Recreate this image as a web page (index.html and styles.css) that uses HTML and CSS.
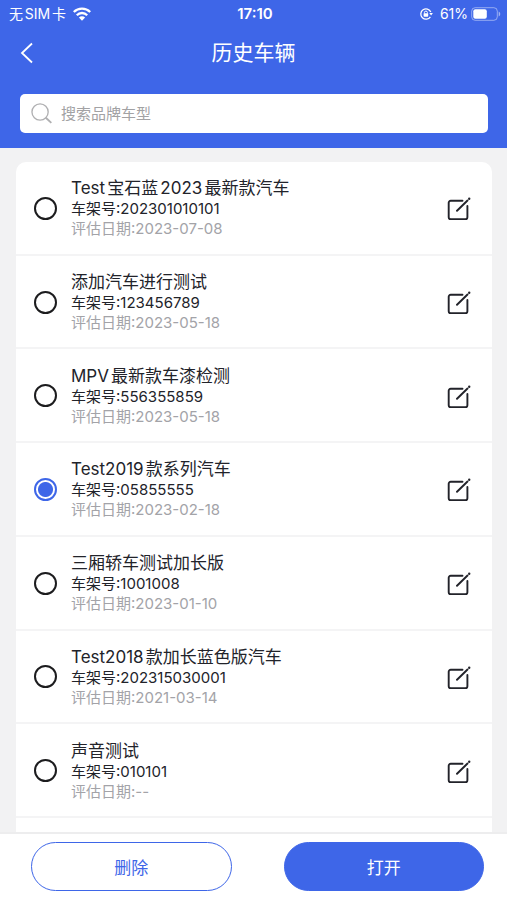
FILE: index.html
```html
<!DOCTYPE html>
<html lang="zh-CN">
<head>
<meta charset="utf-8">
<meta name="viewport" content="width=device-width, initial-scale=1">
<title>历史车辆</title>
<link rel="stylesheet" href="styles.css">
</head>
<body>
<svg class="sprite" aria-hidden="true">
  <symbol id="edit" viewBox="0 0 24 24">
    <path d="M15.500 4.800H3.700a2 2 0 0 0-2 2V21.300a2 2 0 0 0 2 2H18.400a2 2 0 0 0 2-2V10M10 14.800L20.500 4.500" fill="none" stroke="currentColor" stroke-width="1.900" stroke-linecap="round"/>
    <circle cx="22.200" cy="2.800" r="1.200" fill="currentColor"/>
  </symbol>
</svg>
<header class="header">
  <div class="status">
    <div class="status-side">
      <span>无SIM卡</span>
      <svg class="wifi" viewBox="0 0 18 14" aria-hidden="true">
        <g fill="none" stroke="#fff" stroke-width="2.300">
          <path d="M.8 5a11.600 11.600 0 0 1 16.400 0"/>
          <path d="M3.800 8.200a7.300 7.300 0 0 1 10.400 0"/>
        </g>
        <path d="M9 13.800L5.900 10.600a4.400 4.400 0 0 1 6.200 0z" fill="#fff"/>
      </svg>
    </div>
    <strong class="clock">17:10</strong>
    <div class="status-side status-end">
      <svg class="lock" viewBox="0 0 14 14" aria-hidden="true">
        <path d="M11.800 5A5.200 5.200 0 1 0 11.400 9.800" fill="none" stroke="#fff" stroke-width="1.300"/>
        <path d="M10.300 6h3.600l-1.800 2.500z" fill="#fff"/>
        <path d="M5.400 6.500V5.600a1.500 1.500 0 0 1 3 0v.9" fill="none" stroke="#fff"/>
        <rect x="4.600" y="6.200" width="4.600" height="3.500" rx=".6" fill="#fff"/>
      </svg>
      <span>61%</span>
      <svg class="battery" viewBox="0 0 30 14" aria-hidden="true">
        <rect x=".7" y=".7" width="25.600" height="12.600" rx="3.500" fill="none" stroke="#fff" stroke-opacity=".45"/>
        <rect x="2.300" y="2.300" width="13.500" height="9.400" rx="2" fill="#fff"/>
        <path d="M27.700 4.500v5q1.600-.8 1.600-2.500t-1.600-2.500z" fill="#fff" fill-opacity=".5"/>
      </svg>
    </div>
  </div>
  <div class="nav">
    <button class="back" type="button" aria-label="返回">
      <svg viewBox="0 0 14 22" aria-hidden="true"><path d="M12 1.500L2 11l10 9.500" fill="none" stroke="#fff" stroke-width="1.800"/></svg>
    </button>
    <h1>历史车辆</h1>
  </div>
  <label class="search">
    <svg viewBox="0 0 22 22" aria-hidden="true"><g fill="none" stroke="#b0b0b2" stroke-width="1.400"><circle cx="9.500" cy="9.500" r="8.500"/><path d="M15.500 15.500l5.800 5.300" stroke-width="2"/></g></svg>
    <input type="search" placeholder="搜索品牌车型" aria-label="搜索品牌车型">
  </label>
</header>
<main class="content">
  <ul class="list">
    <li class="row">
      <input type="radio" name="car" id="c1">
      <label for="c1"><span class="name">Test宝石蓝2023最新款汽车</span><span class="vin">车架号:202301010101</span><span class="date">评估日期:2023-07-08</span></label>
      <button class="edit" type="button" aria-label="编辑"><svg><use href="#edit"/></svg></button>
    </li>
    <li class="row">
      <input type="radio" name="car" id="c2">
      <label for="c2"><span class="name">添加汽车进行测试</span><span class="vin">车架号:123456789</span><span class="date">评估日期:2023-05-18</span></label>
      <button class="edit" type="button" aria-label="编辑"><svg><use href="#edit"/></svg></button>
    </li>
    <li class="row">
      <input type="radio" name="car" id="c3">
      <label for="c3"><span class="name">MPV最新款车漆检测</span><span class="vin">车架号:556355859</span><span class="date">评估日期:2023-05-18</span></label>
      <button class="edit" type="button" aria-label="编辑"><svg><use href="#edit"/></svg></button>
    </li>
    <li class="row">
      <input type="radio" name="car" id="c4" checked>
      <label for="c4"><span class="name">Test2019款系列汽车</span><span class="vin">车架号:05855555</span><span class="date">评估日期:2023-02-18</span></label>
      <button class="edit" type="button" aria-label="编辑"><svg><use href="#edit"/></svg></button>
    </li>
    <li class="row">
      <input type="radio" name="car" id="c5">
      <label for="c5"><span class="name">三厢轿车测试加长版</span><span class="vin">车架号:1001008</span><span class="date">评估日期:2023-01-10</span></label>
      <button class="edit" type="button" aria-label="编辑"><svg><use href="#edit"/></svg></button>
    </li>
    <li class="row">
      <input type="radio" name="car" id="c6">
      <label for="c6"><span class="name">Test2018款加长蓝色版汽车</span><span class="vin">车架号:202315030001</span><span class="date">评估日期:2021-03-14</span></label>
      <button class="edit" type="button" aria-label="编辑"><svg><use href="#edit"/></svg></button>
    </li>
    <li class="row">
      <input type="radio" name="car" id="c7">
      <label for="c7"><span class="name">声音测试</span><span class="vin">车架号:010101</span><span class="date">评估日期:--</span></label>
      <button class="edit" type="button" aria-label="编辑"><svg><use href="#edit"/></svg></button>
    </li>
  </ul>
</main>
<footer class="actions">
  <button class="btn btn-outline" type="button">删除</button>
  <button class="btn btn-solid" type="button">打开</button>
</footer>
</body>
</html>
```
FILE: styles.css
```css
:root {
  --blue: #3e66e8;
  --line: #f4f4f5;
}

* {
  box-sizing: border-box;
}

body {
  margin: 0;
  min-height: 100vh;
  display: flex;
  flex-direction: column;
  background: #f2f2f3;
  color: #22232a;
  font-family: Inter, "Noto Sans CJK SC", sans-serif;
  text-autospace: normal;
}

button {
  padding: 0;
  border: 0;
  background: none;
  font: inherit;
  color: inherit;
}

svg {
  display: block;
}

.sprite {
  position: absolute;
  width: 0;
  height: 0;
}

.header {
  background: var(--blue);
  color: #fff;
  padding-bottom: 15px;
}

.status {
  display: grid;
  grid-template-columns: 1fr auto 1fr;
  align-items: center;
  height: 28px;
  padding: 0 6px 0 9px;
  font-size: 14px;
  line-height: 20px;
}

.status-side {
  display: flex;
  align-items: center;
  gap: 7px;
}

.status-end {
  justify-content: flex-end;
}

.clock {
  font-size: 15px;
  font-weight: 600;
}

.wifi {
  width: 18px;
  height: 14px;
}

.lock {
  width: 14px;
  height: 14px;
}

.battery {
  width: 30px;
  height: 14px;
  margin-left: -4px;
}

.nav {
  display: grid;
  grid-template-columns: 1fr auto 1fr;
  align-items: center;
  height: 50px;
  padding: 0 20px;
}

.nav h1 {
  margin: 0;
  font-size: 21px;
  font-weight: 400;
  line-height: 30px;
}

.back svg {
  width: 14px;
  height: 22px;
}

.search {
  display: flex;
  align-items: center;
  gap: 9px;
  height: 39px;
  margin: 16px 19px 0 20px;
  padding: 0 11px;
  border-radius: 5px;
  background: #fff;
}

.search svg {
  width: 21px;
  height: 21px;
}

.search input {
  flex: 1;
  min-width: 0;
  padding: 0;
  border: 0;
  outline: 0;
  background: none;
  font: inherit;
  font-size: 15px;
}

.search input::placeholder {
  color: #a2a2a4;
}

.content {
  flex: 1;
  display: flex;
  padding: 14px 15px 0 16px;
}

.list {
  flex: 1;
  display: grid;
  grid-template-rows: repeat(7, 1fr) 14px;
  margin: 0;
  padding: 0;
  list-style: none;
  border-radius: 10px 10px 0 0;
  background: #fff;
}

.row {
  display: flex;
  align-items: center;
  padding: 1px 21px 0 18px;
  border-bottom: 2px solid var(--line);
}

.row input {
  appearance: none;
  flex: none;
  width: 23px;
  height: 23px;
  margin: 0;
  border: 2px solid #1c1c1e;
  border-radius: 50%;
}

.row input:checked {
  border-color: var(--blue);
  background: radial-gradient(circle, var(--blue) 7px, #fff 8px);
}

.row label {
  flex: 1;
  display: flex;
  flex-direction: column;
  padding-left: 14px;
  font-size: 15px;
  line-height: 20px;
}

.row .name {
  font-size: 17px;
  line-height: 22px;
}

.vin,
.date {
  text-autospace: no-autospace;
}

.date {
  color: #a3a3a8;
}

.edit svg {
  width: 24px;
  height: 24px;
}

.actions {
  display: flex;
  gap: 52px;
  padding: 8px 23px 9px 31px;
  border-top: 2px solid #ededee;
  background: #fff;
}

.btn {
  flex: 1;
  height: 49px;
  border: 1px solid var(--blue);
  border-radius: 25px;
  font-size: 17px;
}

.btn-outline {
  color: var(--blue);
}

.btn-solid {
  background: var(--blue);
  color: #fff;
}
```
